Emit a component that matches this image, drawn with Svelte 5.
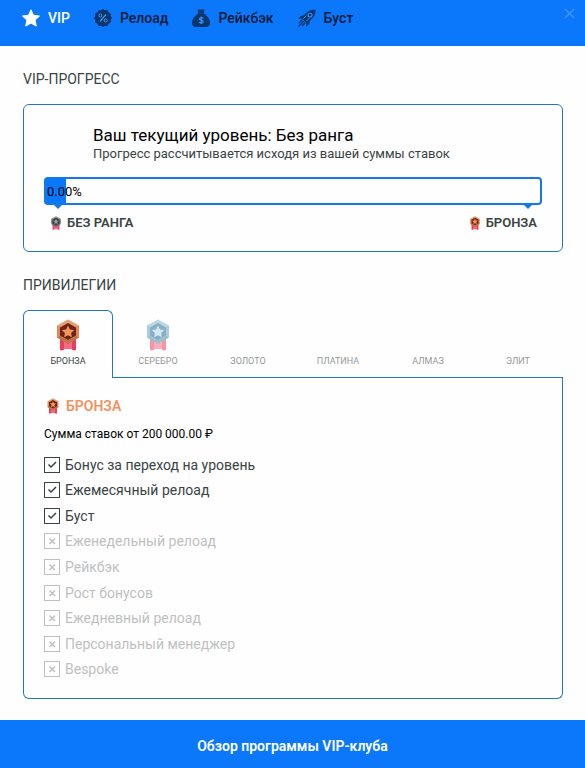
<svelte:options runes={true} />

<script lang='ts'>
	type Palette = { edge: string; core: string; star: string; ribbon: string };

	const PALETTES: Record<string, Palette> = {
		none: { edge: '#79817f', core: '#303b3c', star: '#9aa19f', ribbon: '#e8475f' },
		bronze: { edge: '#e5884f', core: '#6b231b', star: '#f0985c', ribbon: '#e83d5c' },
		silver: { edge: '#5fa9cc', core: '#2f708e', star: '#acd7e8', ribbon: '#ee3f5b' },
	};

	const menu = [
		{ id: 'vip', label: 'VIP' },
		{ id: 'reload', label: 'Релоад' },
		{ id: 'rakeback', label: 'Рейкбэк' },
		{ id: 'boost', label: 'Буст' },
	];

	const levels = [
		{ id: 'bronze', label: 'Бронза' },
		{ id: 'silver', label: 'Серебро' },
		{ id: 'gold', label: 'Золото' },
		{ id: 'platinum', label: 'Платина' },
		{ id: 'diamond', label: 'Алмаз' },
		{ id: 'elite', label: 'Элит' },
	];

	const perks = [
		{ label: 'Бонус за переход на уровень', active: true },
		{ label: 'Ежемесячный релоад', active: true },
		{ label: 'Буст', active: true },
		{ label: 'Еженедельный релоад', active: false },
		{ label: 'Рейкбэк', active: false },
		{ label: 'Рост бонусов', active: false },
		{ label: 'Ежедневный релоад', active: false },
		{ label: 'Персональный менеджер', active: false },
		{ label: 'Bespoke', active: false },
	];

	let page = $state('vip');
	let levelId = $state('bronze');
	let progress = $state(0);

	const level = $derived(levels.find(l => l.id === levelId) ?? levels[0]);
</script>

{#snippet medal(kind: string)}
	{@const p = PALETTES[kind]}
	<svg class='medal' viewBox='0 0 24 32' aria-hidden='true'>
		<path d='M4 17v13q0 1.500 1.500 1.500 2 0 3-1.500h7q1 1.500 3 1.500 1.500 0 1.500-1.500V17z' fill={p.ribbon} />
		<path d='M8 21v9h8v-9z' fill='#fff' opacity='.25' />
		<path d='M12 .500 23 6.500v12L12 25 1 18.500v-12z' fill={p.edge} />
		<path d='M12 .500 23 6.500l-3 2L12 4 4 8.500l-3-2z' fill='#fff' opacity='.2' />
		<path d='M1 18.500 12 25l11-6.500-3-2-8 5-8-5z' fill='#000' opacity='.16' />
		<path d='m12 4 8 4.500v8L12 21l-8-4.500v-8z' fill={p.core} />
		<path d='m12 6.500 1.900 3.900 4.300.6-3.100 3 .7 4.300-3.800-2-3.800 2 .7-4.300-3.100-3 4.300-.6z' fill={p.star} />
	</svg>
{/snippet}

<div class='club'>
	<header>
		<nav>
			{#each menu as item}
				<button class={page === item.id ? 'active' : ''} type='button' onclick={() => (page = item.id)}>
					<svg viewBox='0 0 18 18' aria-hidden='true'>
						{#if item.id === 'vip'}
							<path d='m9 .8 2.500 5.500 6 .7-4.400 4.100 1.200 6L9 14.100l-5.300 3 1.200-6L.5 7l6-.7z' fill='currentColor' stroke='currentColor' stroke-linejoin='round' />
						{:else if item.id === 'reload'}
							<path d='m9 .5 2 1.300 2.300-.2 1 2.100 2.100 1-.2 2.300L17.500 9l-1.300 2 .2 2.300-2.100 1-1 2.100-2.300-.2L9 17.500l-2-1.300-2.300.2-1-2.100-2.100-1 .2-2.300L.5 9l1.300-2-.2-2.300 2.100-1 1-2.100 2.300.2z' fill='#08366f' stroke='#08366f' stroke-linejoin='round' />
							<path d='m6 12.500 6-7' stroke='#5394e5' stroke-width='1.200' />
							<circle cx='6.300' cy='6.500' r='1.500' fill='none' stroke='#5394e5' />
							<circle cx='11.700' cy='11.500' r='1.500' fill='none' stroke='#5394e5' />
						{:else if item.id === 'rakeback'}
							<path d='M5.500.5h7L11.800 4.500H6.200z' fill='#08366f' />
							<path d='M6 5h6c3 2 5.500 5 5.500 9 0 2.500-1 3.500-3.500 3.500H4c-2.500 0-3.500-1-3.500-3.500C.5 10 3 7 6 5z' fill='#08366f' stroke='#08366f' />
							<path d='M11.200 9.300c-.6-.8-3.800-1-3.800.8 0 1.700 3.800.8 3.800 2.600 0 1.700-3.300 1.600-4.100.5M9.200 7.500v7.500' fill='none' stroke='#3f91f2' stroke-width='1.200' />
						{:else}
							<path d='M17.500.5c-5-.2-8.500 2-11 5.500L2.500 7 .5 10l3.500-.5 4.500 4.500-.5 3.500 3-2 1-4c3.500-2.500 5.700-6 5.500-11z' fill='#08366f' />
							<path d='m4 11-2.500 2.500M5.500 12.500 1 17M7 14l-2.500 2.500' stroke='#08366f' stroke-width='1.400' stroke-linecap='round' />
							<circle cx='12' cy='6' r='2' fill='none' stroke='#368df6' stroke-width='1.200' />
							<path d='m5.500 9.500 3-3M8.500 12l3-3' stroke='#368df6' />
						{/if}
					</svg>
					{item.label}
				</button>
			{/each}
		</nav>
		<button class='close' type='button' aria-label='Закрыть'>
			<svg viewBox='0 0 12 12' aria-hidden='true'>
				<path d='m1 1 10 10M11 1 1 11' stroke='currentColor' stroke-width='1.500' />
			</svg>
		</button>
	</header>

	<main>
		<h2>VIP-прогресс</h2>
		<section class='progress'>
			<div class='intro'>
				<h3>Ваш текущий уровень: Без ранга</h3>
				<p>Прогресс рассчитывается исходя из вашей суммы ставок</p>
			</div>
			<div class='bar' role='progressbar' aria-label='VIP-прогресс' aria-valuenow={progress} aria-valuemin='0' aria-valuemax='100'>
				<div class='fill' style:width='{progress}%'></div>
				<span>{progress.toFixed(2)}%</span>
			</div>
			<div class='ranks'>
				<div class='rank'>{@render medal('none')}Без ранга</div>
				<div class='rank'>{@render medal('bronze')}Бронза</div>
			</div>
		</section>

		<h2>Привилегии</h2>
		<div class='tabs' role='tablist'>
			{#each levels as item}
				<button
					class={levelId === item.id ? 'active' : ''}
					type='button'
					role='tab'
					aria-selected={levelId === item.id}
					onclick={() => (levelId = item.id)}
				>
					{#if PALETTES[item.id]}
						{@render medal(item.id)}
					{/if}
					<span>{item.label}</span>
				</button>
			{/each}
		</div>
		<section class='panel' role='tabpanel'>
			<h4>
				{#if PALETTES[level.id]}
					{@render medal(level.id)}
				{/if}
				{level.label}
			</h4>
			<p>Сумма ставок от 200 000.00 ₽</p>
			<ul>
				{#each perks as perk}
					<li>
						<label class={perk.active ? '' : 'off'}>
							<span class='tick'>
								<input type='checkbox' checked={perk.active} disabled={!perk.active} />
								<svg viewBox='0 0 16 16' aria-hidden='true'>
									{#if perk.active}
										<path d='m4.500 7.500 2.500 2.500 5-5' />
									{:else}
										<path d='m5.500 5.500 5.500 5.500M11 5.500 5.500 11' />
									{/if}
								</svg>
							</span>
							{perk.label}
						</label>
					</li>
				{/each}
			</ul>
		</section>
	</main>

	<footer>
		<button type='button'>Обзор программы VIP-клуба</button>
	</footer>
</div>

<style>
	:global(body) {
		background: #fefefe;
	}
	.club {
		display: flex;
		flex-direction: column;
		min-height: 100vh;
		font-family: Roboto, 'Noto Sans', sans-serif;
		color: #3a4344;
	}
	button {
		border: 0;
		background: none;
		padding: 0;
		font: inherit;
		color: inherit;
		cursor: pointer;
	}
	h2, h3, h4, p, ul {
		margin: 0;
		padding: 0;
	}
	header {
		display: flex;
		justify-content: space-between;
		align-items: flex-start;
		padding: 8px 10px 18px 22px;
		background: #0b78fc;
	}
	nav {
		display: flex;
		gap: 24px;
	}
	nav button {
		display: flex;
		align-items: center;
		gap: 8px;
		font-size: 14px;
		font-weight: 500;
		line-height: 20px;
		color: #031a38;
	}
	nav button svg {
		width: 18px;
		height: 18px;
	}
	nav .active {
		color: #fff;
	}
	.close {
		color: #3f96ff;
	}
	.close svg {
		display: block;
		width: 11px;
		height: 11px;
	}
	main {
		flex: 1;
		padding: 0 22px 20px 23px;
	}
	h2 {
		padding: 23px 0 15px;
		font-size: 14px;
		font-weight: 400;
		line-height: 20px;
		text-transform: uppercase;
	}
	.progress {
		padding: 20px 20px 18px;
		border: 1px solid #1c78cf;
		border-radius: 6px;
	}
	.intro {
		padding: 0 49px;
	}
	h3 {
		font-size: 17px;
		font-weight: 400;
		line-height: 20px;
		color: #000;
	}
	.intro p {
		font-size: 13px;
		line-height: 18px;
	}
	.bar {
		position: relative;
		display: flex;
		align-items: center;
		margin-top: 14px;
		height: 24px;
		border: 2px solid #1578e8;
		border-radius: 4px;
		font-size: 13px;
		color: #000;
	}
	.bar::before, .bar::after {
		content: '';
		position: absolute;
		top: 100%;
		border: 6px solid transparent;
		border-top-color: #1578e8;
		border-bottom: 0;
	}
	.bar::before {
		left: 6px;
	}
	.bar::after {
		right: 6px;
	}
	.fill {
		min-width: 20px;
		height: 100%;
		background: #0b78fc;
	}
	.bar span {
		position: absolute;
		left: 1px;
	}
	.ranks {
		display: flex;
		justify-content: space-between;
		padding: 8px 5px 0;
	}
	.rank {
		display: flex;
		align-items: center;
		gap: 4px;
		font-size: 13px;
		font-weight: 600;
		line-height: 20px;
		text-transform: uppercase;
	}
	.medal {
		width: 14px;
		height: 14px;
	}
	.tabs {
		display: grid;
		grid-template-columns: repeat(6, 1fr);
	}
	.tabs button {
		display: flex;
		flex-direction: column;
		align-items: center;
		justify-content: flex-end;
		gap: 2px;
		min-height: 68px;
		padding: 8px 0;
		border-bottom: 1px solid #1c78cf;
		border-radius: 0;
		font-size: 9px;
		line-height: 16px;
		text-transform: uppercase;
	}
	.tabs button:not(.active) > :global(*) {
		opacity: .55;
	}
	.tabs .active {
		border: 1px solid #1c78cf;
		border-bottom: 0;
		padding-bottom: 9px;
		border-radius: 6px 6px 0 0;
	}
	.tabs .medal {
		width: 24px;
		height: 32px;
	}
	.panel {
		padding: 18px 20px 16px;
		border: 1px solid #1c78cf;
		border-top: 0;
		border-radius: 0 0 6px 6px;
	}
	h4 {
		display: flex;
		align-items: center;
		gap: 4px;
		font-size: 14px;
		font-weight: 600;
		line-height: 20px;
		text-transform: uppercase;
		color: #f2925c;
	}
	h4 .medal {
		width: 18px;
		height: 16px;
	}
	.panel p {
		padding: 8px 0;
		font-size: 12px;
		line-height: 20px;
		color: #000;
	}
	ul {
		display: grid;
		grid-auto-rows: 1fr;
		min-height: 230px;
		list-style: none;
	}
	label {
		display: flex;
		align-items: center;
		gap: 5px;
		height: 100%;
		font-size: 14px;
		line-height: 20px;
	}
	.tick {
		display: grid;
		width: 16px;
		height: 16px;
	}
	.tick > * {
		grid-area: 1 / 1;
		width: 16px;
		height: 16px;
	}
	.tick input {
		appearance: none;
		box-sizing: border-box;
		margin: 0;
		border: 1px solid currentColor;
		color: inherit;
	}
	.tick svg {
		pointer-events: none;
		fill: none;
		stroke: currentColor;
		stroke-width: 1.500;
	}
	.off {
		color: #bfc1c1;
	}
	footer {
		background: #0b78fc;
	}
	footer button {
		display: block;
		width: 100%;
		padding: 16px 0 12px;
		font-size: 14px;
		font-weight: 600;
		line-height: 20px;
		color: #fff;
	}
</style>
